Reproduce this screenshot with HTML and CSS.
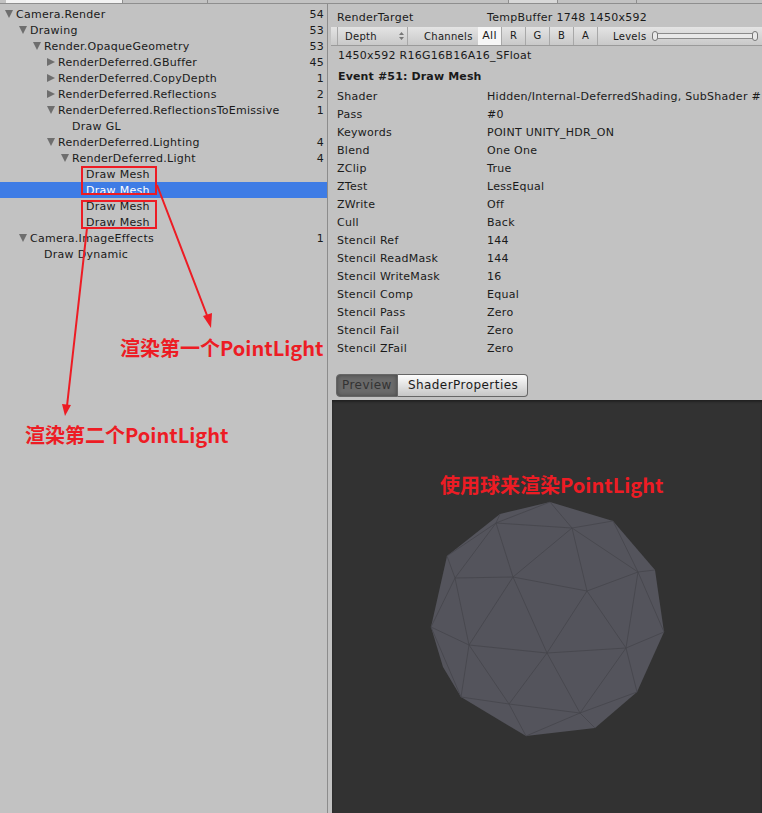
FILE: index.html
```html
<!DOCTYPE HTML><html><head>
  <meta charset="utf-8">
  <title>Frame Debugger</title>
  <meta name="viewport" content="width=device-width, initial-scale=1">
  <link rel="stylesheet" href="styles.css"></head><body>
  <div class="page">
    <div class="top-strip">
      <span class="strip-tab t1"></span><span class="strip-tab t2"></span><span class="strip-tab t3"></span><span class="strip-tab t4"></span><span class="strip-tab t5"></span><span class="strip-tab t6"></span>
    </div>
    <div class="main">
      <div class="tree">
        <div class="row d0"><i class="arr down"></i><span class="name">Camera.Render</span><span class="count">54</span></div>
        <div class="row d1"><i class="arr down"></i><span class="name">Drawing</span><span class="count">53</span></div>
        <div class="row d2"><i class="arr down"></i><span class="name">Render.OpaqueGeometry</span><span class="count">53</span></div>
        <div class="row d3"><i class="arr right"></i><span class="name">RenderDeferred.GBuffer</span><span class="count">45</span></div>
        <div class="row d3"><i class="arr right"></i><span class="name">RenderDeferred.CopyDepth</span><span class="count">1</span></div>
        <div class="row d3"><i class="arr right"></i><span class="name">RenderDeferred.Reflections</span><span class="count">2</span></div>
        <div class="row d3"><i class="arr down"></i><span class="name">RenderDeferred.ReflectionsToEmissive</span><span class="count">1</span></div>
        <div class="row d4"><i class="arr"></i><span class="name">Draw GL</span></div>
        <div class="row d3"><i class="arr down"></i><span class="name">RenderDeferred.Lighting</span><span class="count">4</span></div>
        <div class="row d4"><i class="arr down"></i><span class="name">RenderDeferred.Light</span><span class="count">4</span></div>
        <div class="row d5"><i class="arr"></i><span class="name">Draw Mesh</span></div>
        <div class="row d5 selected"><i class="arr"></i><span class="name">Draw Mesh</span></div>
        <div class="row d5"><i class="arr"></i><span class="name">Draw Mesh</span></div>
        <div class="row d5"><i class="arr"></i><span class="name">Draw Mesh</span></div>
        <div class="row d1"><i class="arr down"></i><span class="name">Camera.ImageEffects</span><span class="count">1</span></div>
        <div class="row d2"><i class="arr"></i><span class="name">Draw Dynamic</span></div>
      </div>
      <div class="details">
        <div class="prop first"><span>RenderTarget</span><span>TempBuffer 1748 1450x592</span></div>
        <div class="toolbar">
          <div class="tb-depth"><span>Depth</span><svg class="updown" width="5" height="8" viewBox="0 0 5 8"><path d="M2.5,0L5,3H0ZM2.5,8L0,5H5Z"/></svg></div>
          <span class="tb-label channels">Channels</span>
          <span class="tb-btn on">All</span><span class="tb-btn">R</span><span class="tb-btn">G</span><span class="tb-btn">B</span><span class="tb-btn last">A</span>
          <span class="tb-label levels">Levels</span>
          <div class="slider"><i class="knob"></i><i class="knob"></i></div>
        </div>
        <div class="format">1450x592 R16G16B16A16_SFloat</div>
        <div class="event">Event #51: Draw Mesh</div>
        <div class="props">
          <div class="prop"><span>Shader</span><span>Hidden/Internal-DeferredShading, SubShader #</span></div>
          <div class="prop"><span>Pass</span><span>#0</span></div>
          <div class="prop"><span>Keywords</span><span>POINT UNITY_HDR_ON</span></div>
          <div class="prop"><span>Blend</span><span>One One</span></div>
          <div class="prop"><span>ZClip</span><span>True</span></div>
          <div class="prop"><span>ZTest</span><span>LessEqual</span></div>
          <div class="prop"><span>ZWrite</span><span>Off</span></div>
          <div class="prop"><span>Cull</span><span>Back</span></div>
          <div class="prop"><span>Stencil Ref</span><span>144</span></div>
          <div class="prop"><span>Stencil ReadMask</span><span>144</span></div>
          <div class="prop"><span>Stencil WriteMask</span><span>16</span></div>
          <div class="prop"><span>Stencil Comp</span><span>Equal</span></div>
          <div class="prop"><span>Stencil Pass</span><span>Zero</span></div>
          <div class="prop"><span>Stencil Fail</span><span>Zero</span></div>
          <div class="prop"><span>Stencil ZFail</span><span>Zero</span></div>
        </div>
        <div class="tabs"><span class="tab active">Preview</span><span class="tab">ShaderProperties</span></div>
        <div class="preview">
          <svg class="sphere" width="430" height="413" viewBox="332 400 430 413">
            <polygon class="ball" points="550,502 613,521 655,570 664,632 637,692 595,728 526,736 461,697 443,667 431,627 447,556 500,514"/>
            <path class="mesh" d="M550,502L496,523L500,514M496,523L447,556M496,523L455,578L513,577L496,523L572,528L550,502M572,528L613,521L638,572L572,528L587,591L638,572L655,570M572,528L513,577L587,591L547,653L513,577L469,645L455,578L447,556M455,578L431,627L469,645L547,653L626,648L587,591M638,572L626,648M638,572L664,632L626,648L637,692L580,713L626,648M580,713L547,653L509,704L469,645L461,697L509,704L526,736L580,713L595,728M509,704L580,713M431,627L461,697"/>
          </svg>
        </div>
      </div>
    </div>
    <svg class="marks" width="762" height="813" viewBox="0 0 762 813">
      <rect x="82" y="167" width="74" height="27"/>
      <rect x="82" y="201" width="74" height="27"/>
      <path d="M157,185L208,318M87,228L67,406"/>
      <polygon points="211,328 203,316 212,313"/>
      <polygon points="65,416 62,404 71,405"/>
    </svg>
    <span class="note n1">渲染第一个PointLight</span>
    <span class="note n2">渲染第二个PointLight</span>
    <span class="note n3">使用球来渲染PointLight</span>
  </div>
</body></html>
```

FILE: styles.css
```css
* {box-sizing: border-box}
body {
  margin: 0;
  background-color: #c2c2c2;
}
.page {
  position: relative;
  width: 762px;
  height: 813px;
  overflow: hidden;
  font-family: "DejaVu Sans", sans-serif;
  font-size: 11px;
  letter-spacing: .28px;
  color: #1a1a1a;
}
.top-strip {
  display: flex;
  height: 4px;
  border-bottom: 1px solid #8e8e8e;
}
.strip-tab {
  border-right: 1px solid #8e8e8e;
}
.t1 {width: 6px; border-right: 0}
.t2 {width: 117px; background-color: #f2f2f2}
.t3 {width: 85px}
.t4 {width: 301px}
.t5 {width: 49px; background-color: #d8d8d8}
.t6 {width: 79px}

.main {
  display: grid;
  grid-template-columns: 328px 1fr;
  height: 809px;
}
.tree {
  padding-top: 2px;
  border-right: 1px solid #8c8c8c;
}
.row {
  display: flex;
  align-items: center;
  height: 16px;
  padding-right: 3px;
}
.row.selected {
  background-color: #3e7ce5;
  color: white;
}
.d0 {padding-left: 3px}
.d1 {padding-left: 17px}
.d2 {padding-left: 31px}
.d3 {padding-left: 45px}
.d4 {padding-left: 59px}
.d5 {padding-left: 73px}
.arr {
  display: block;
  width: 13px;
  height: 8px;
  flex: none;
}
.arr.down {
  width: 0;
  margin: 0 3px 0 2px;
  border-left: 4px solid transparent;
  border-right: 4px solid transparent;
  border-top: 8px solid #6e6e6e;
}
.arr.right {
  width: 0;
  margin: 0 3px 0 2px;
  height: 0;
  border-top: 4.5px solid transparent;
  border-bottom: 4.5px solid transparent;
  border-left: 8px solid #6e6e6e;
}
.name {flex: 1}

.details {
  padding-left: 3px;
}
.prop {
  display: grid;
  grid-template-columns: 150px 1fr;
  height: 18px;
  line-height: 18px;
  padding-left: 6px;
  white-space: nowrap;
}
.prop.first {
  margin-top: 5px;
  height: 17px;
}
.toolbar {
  display: flex;
  align-items: center;
  height: 19px;
  margin-top: 1px;
  background: linear-gradient(#e4e4e4, #c9c9c9);
  border-bottom: 1px solid #9a9a9a;
  font-size: 10px;
}
.tb-depth {
  display: flex;
  justify-content: space-between;
  align-items: center;
  width: 71px;
  height: 100%;
  margin-left: 6px;
  padding: 0 3px 0 7px;
  border-left: 1px solid #a8a8a8;
  border-right: 1px solid #a8a8a8;
}
.updown {fill: #777}
.tb-label {
  letter-spacing: .3px;
}
.channels {
  width: 70px;
  padding-left: 16px;
}
.tb-btn {
  width: 24px;
  height: 100%;
  line-height: 18px;
  text-align: center;
  border-right: 1px solid #a8a8a8;
}
.tb-btn.on {
  background-color: #f6f6f6;
  font-size: 11px;
}
.levels {
  width: 39px;
  margin-left: 15px;
}
.slider {
  position: relative;
  width: 106px;
  height: 6px;
  border: 1px solid #8a8a8a;
  border-radius: 3px;
  background-color: #e8e8e8;
}
.knob {
  position: absolute;
  top: -3px;
  left: -1px;
  width: 6px;
  height: 10px;
  border: 1px solid #777;
  border-radius: 3px;
  background-color: #e8e8e8;
}
.knob + .knob {left: auto; right: -1px}
.format {
  height: 20px;
  padding-left: 7px;
  line-height: 20px;
}
.event {
  height: 22px;
  padding-left: 7px;
  line-height: 22px;
  font-weight: bold;
  letter-spacing: .15px;
}
.props {
  height: 286px;
}
.tabs {
  display: flex;
  margin-left: 5px;
  height: 23px;
}
.tab {
  padding: 0 9px 0 10px;
  line-height: 21px;
  font-size: 12px;
  letter-spacing: .45px;
  border: 1px solid #666;
  border-left: 0;
  border-radius: 0 4px 4px 0;
  background: linear-gradient(#fdfdfd, #c6c6c6);
}
.tab.active {
  padding: 0 5px;
  border-left: 1px solid #666;
  border-radius: 4px 0 0 4px;
  color: #333;
  background: #6a6a6a;
  box-shadow: inset 0 0 4px #444;
}
.preview {
  height: 413px;
  margin: 3px 0 0 1px;
  background-color: #323232;
  box-shadow: inset 0 2px 2px #222;
}
.sphere {display: block}
.ball {fill: #54545c}
.mesh {
  fill: none;
  stroke: #45454b;
  stroke-width: .8;
}
.marks {
  position: absolute;
  top: 0;
  left: 0;
}
.marks rect, .marks path {
  fill: none;
  stroke: #ed1c24;
  stroke-width: 2;
}
.marks polygon {fill: #ed1c24}
.note {
  position: absolute;
  font-family: "Noto Sans CJK SC", sans-serif;
  font-size: 20px;
  font-weight: bold;
  line-height: 24px;
  letter-spacing: 0;
  color: #ed1c24;
  white-space: nowrap;
}
.n1 {left: 120px; top: 336px}
.n2 {left: 25px; top: 423px}
.n3 {left: 440px; top: 473px}
```
